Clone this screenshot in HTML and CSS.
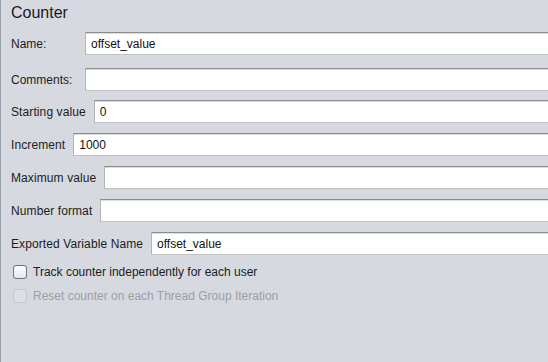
FILE: index.html
```html
<!DOCTYPE html>
<html lang="en">
<head>
    <meta charset="UTF-8">
    <meta name="viewport" content="width=device-width, initial-scale=1.0">
    <title>Counter</title>
    <link rel="stylesheet" href="styles.css">
</head>
<body>
    <div class="panel">
        <h1 class="title">Counter</h1>

        <div class="names">
            <div class="row">
                <label class="label wide" for="name">Name:</label>
                <input type="text" id="name" value="offset_value">
            </div>
            <div class="row">
                <label class="label wide" for="comments">Comments:</label>
                <input type="text" id="comments">
            </div>
        </div>

        <div class="fields">
            <div class="row">
                <label class="label" for="start">Starting value</label>
                <input type="text" id="start" value="0">
            </div>
            <div class="row">
                <label class="label" for="incr">Increment</label>
                <input type="text" id="incr" value="1000">
            </div>
            <div class="row">
                <label class="label" for="max">Maximum value</label>
                <input type="text" id="max">
            </div>
            <div class="row">
                <label class="label" for="format">Number format</label>
                <input type="text" id="format">
            </div>
            <div class="row">
                <label class="label" for="varName">Exported Variable Name</label>
                <input type="text" id="varName" value="offset_value">
            </div>
        </div>

        <div class="checks">
            <label class="check">
                <span class="box"></span>
                Track counter independently for each user
            </label>
            <label class="check disabled">
                <span class="box"></span>
                Reset counter on each Thread Group Iteration
            </label>
        </div>
    </div>
</body>
</html>
```

FILE: styles.css
```css
html, body {
    margin: 0;
    padding: 0;
    height: 100%;
    overflow: hidden;
}

body {
    font-family: "Liberation Sans", Arial, sans-serif;
    font-size: 12px;
    color: #1c1c1c;
    background-color: #d6d9e0;
}

.panel {
    height: 100%;
    box-sizing: border-box;
    border-left: 1px solid #9a9eab;
    padding: 0 0 0 10px;
}

.title {
    margin: 0;
    padding-top: 3px;
    height: 29px;
    font-size: 16px;
    font-weight: normal;
    line-height: 20px;
    color: #1a1a1a;
}

.row {
    display: flex;
    align-items: center;
    height: 23px;
    margin-bottom: 10px;
}

.names .row {
    margin-bottom: 13px;
}

.names .row:last-child {
    margin-bottom: 9px;
}

.fields .row:last-child {
    margin-bottom: 5px;
}

.label {
    margin-right: 8px;
    white-space: nowrap;
}

.label.wide {
    width: 66px;
}

.fields .label {
    letter-spacing: 0.1px;
}

input[type="text"] {
    flex: 1;
    min-width: 0;
    height: 23px;
    box-sizing: border-box;
    padding: 0 5px;
    font-family: "Liberation Sans", Arial, sans-serif;
    font-size: 12px;
    color: #111;
    background-color: #fff;
    border: 1px solid #b4b4b4;
    border-top-color: #8c8c8c;
    border-bottom-color: #c2c2c2;
    border-right: none;
    box-shadow: inset 0 1px 0 #dcdcdc;
    outline: none;
}

.check {
    display: flex;
    align-items: center;
    height: 24px;
    padding-left: 2px;
}

.box {
    width: 12px;
    height: 12px;
    margin-right: 6px;
    border: 1px solid #6f7278;
    border-radius: 3px;
    background: linear-gradient(#ffffff, #e4e6ea);
}

.check.disabled {
    color: #9c9fa6;
}

.check.disabled .box {
    border-color: #c3c6cc;
    background: #dcdfe5;
}
```
